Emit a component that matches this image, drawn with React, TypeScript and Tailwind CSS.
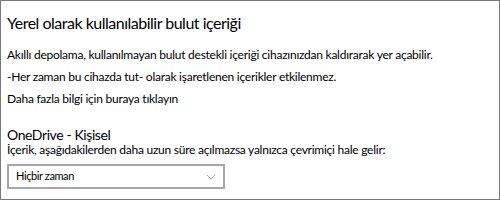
import { ChevronDown } from 'lucide-react'

// ─── Component ───────────────────────────────────────────────────────────────

export default function App() {
  return (
    <div
      className="h-[200px] w-[500px] border border-[#7a7a7a] bg-white pl-[6px] text-black"
      style={{ fontFamily: 'Lato, "Liberation Sans", Arial, sans-serif' }}
    >
      {/* Heading */}
      <h1 className="mt-[10px] text-[16px] leading-[24px] tracking-[-0.5px]">
        Yerel olarak kullanılabilir bulut içeriği
      </h1>

      {/* Description */}
      <div className="mt-[9px] text-[12px] leading-[22px] tracking-[-0.25px]">
        <p>Akıllı depolama, kullanılmayan bulut destekli içeriği cihazınızdan kaldırarak yer açabilir.</p>
        <p>-Her zaman bu cihazda tut- olarak işaretlenen içerikler etkilenmez.</p>
        <p>Daha fazla bilgi için buraya tıklayın</p>
      </div>

      {/* OneDrive account */}
      <div className="mt-[17px] text-[14px] leading-[16px] tracking-[-0.4px]">OneDrive - Kişisel</div>
      <div className="text-[12px] leading-[14px] tracking-[-0.25px]">
        İçerik, aşağıdakilerden daha uzun süre açılmazsa yalnızca çevrimiçi hale gelir:
      </div>

      <button className="mt-[7px] flex h-[25px] w-[218px] items-center justify-between border-2 border-[#a6a6a6] bg-white pl-[7px] pr-[4px] text-[11px] tracking-[-0.4px]">
        <span>Hiçbir zaman</span>
        <ChevronDown className="h-[16px] w-[16px] text-[#7a7a7a]" strokeWidth={1} />
      </button>
    </div>
  )
}
